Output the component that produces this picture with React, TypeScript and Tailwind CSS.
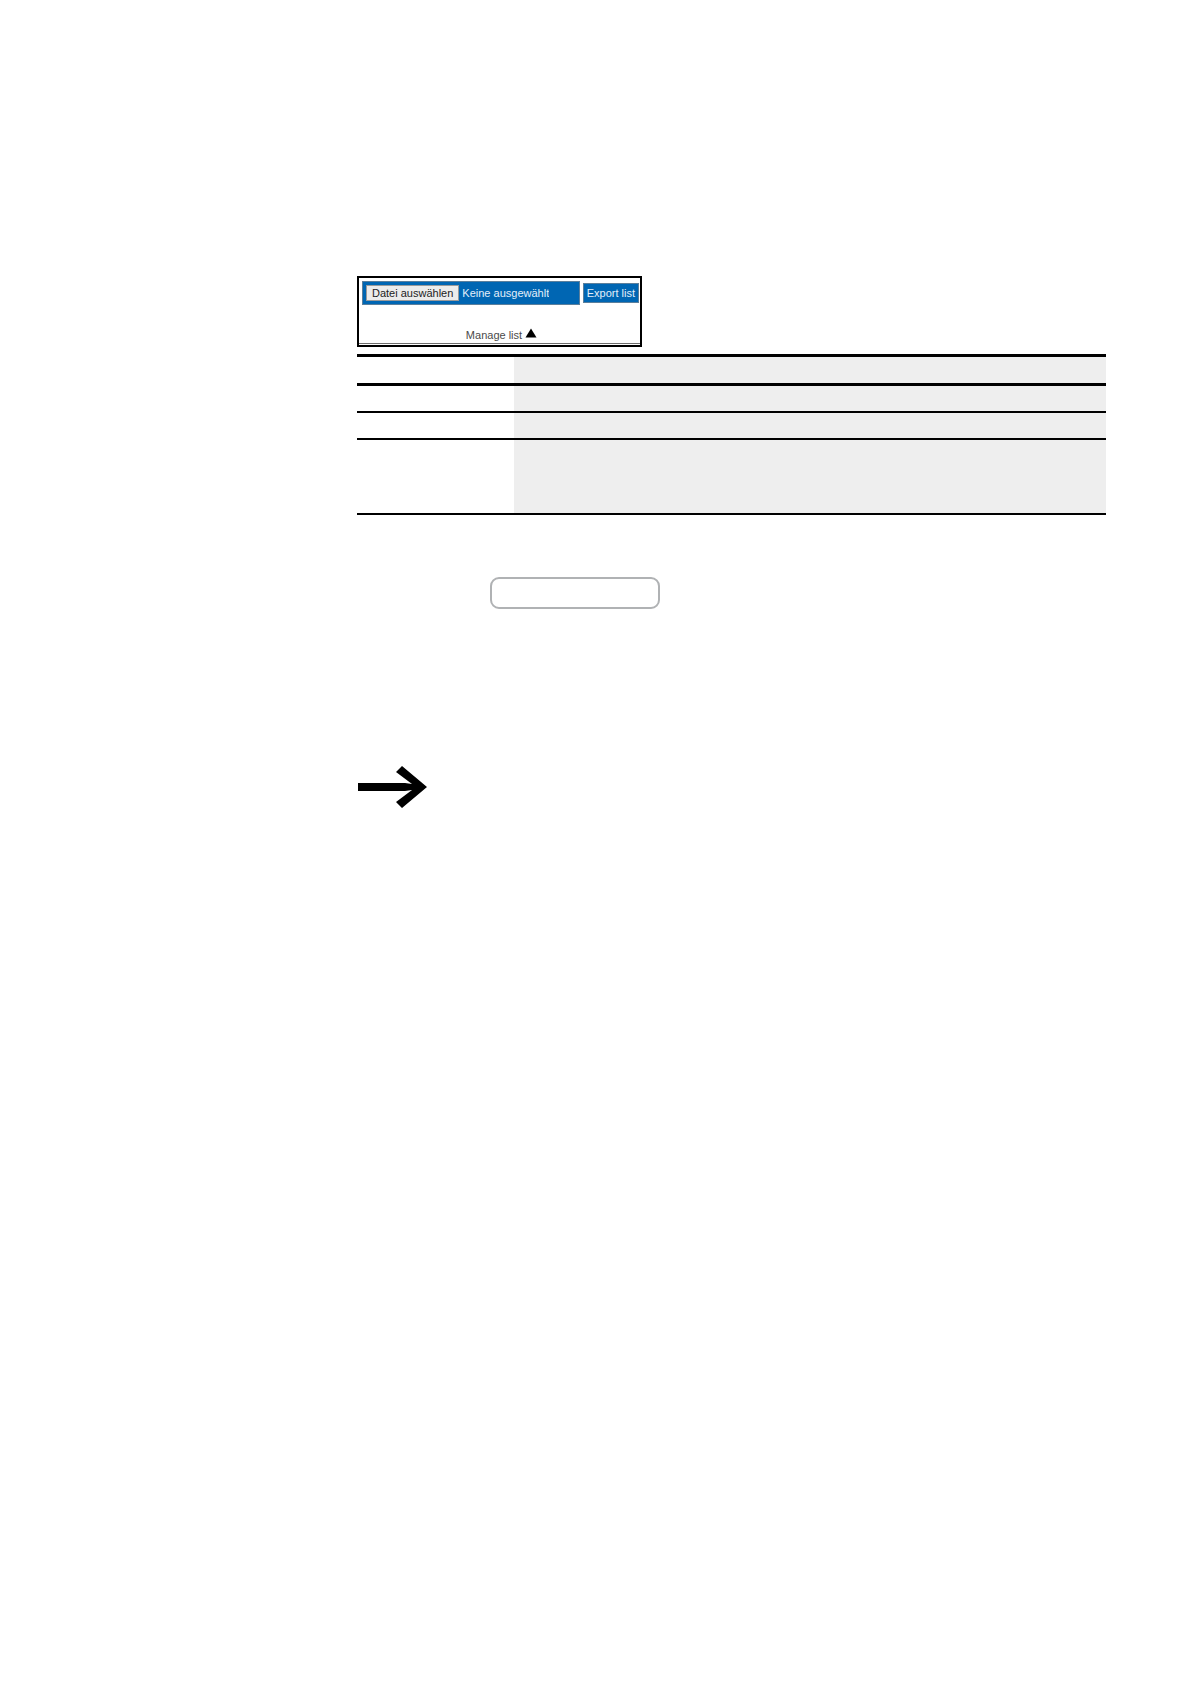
import { useRef, useState } from 'react';
import clsx from 'clsx';

// ── Shared constants ──

/** Row rules get thinner below the heading rows */
const ROWS = [
  { id: 'head', className: 'h-[29px] border-t-[3px]' },
  { id: 'choose', className: 'h-7 border-t-[3px]' },
  { id: 'export', className: 'h-[27px] border-t-2' },
  { id: 'manage', className: 'h-[77px] border-y-2' },
];

// ── ListManager ──

function ListManager() {
  const fileRef = useRef<HTMLInputElement>(null);
  const [fileName, setFileName] = useState('Keine ausgewählt');

  return (
    <section className="w-[285px] border-2 border-black bg-white pt-[3px] pb-px text-[11px]">
      <div className="flex items-center gap-[3px] pr-px pl-[3px]">
        <div className="flex h-6 flex-1 items-center gap-[3px] border border-[#5b7f9c] bg-[#0066b3] px-[3px]">
          <button
            type="button"
            onClick={() => fileRef.current?.click()}
            className="h-4 shrink-0 border border-[#9a9a9a] bg-[#ececec] px-[5px] leading-3 whitespace-nowrap text-[#1c1c1c]"
          >
            Datei auswählen
          </button>
          <input
            ref={fileRef}
            type="file"
            aria-label="Datei auswählen"
            className="hidden"
            onChange={(e) => setFileName(e.target.files?.[0]?.name ?? 'Keine ausgewählt')}
          />
          <span className="truncate text-[#e3effa]">{fileName}</span>
        </div>
        <button
          type="button"
          className="h-5 shrink-0 border border-[#5b7f9c] bg-[#0066b3] px-[3px] leading-4 text-[#e3effa]"
        >
          Export list
        </button>
      </div>

      {/* Collapse toggle */}
      <div className="mt-5 flex h-[19px] items-end justify-center border-b border-[#6e6e6e]">
        <button type="button" className="flex items-center gap-[3px] pl-1 leading-4 text-[#4a4a4a]">
          Manage list
          <svg viewBox="0 0 12 10" className="mb-1 h-[10px] w-3" aria-hidden="true">
            <path d="M6 0.5 11.5 9.5H0.5Z" fill="#000" />
          </svg>
        </button>
      </div>
    </section>
  );
}

// ── DescriptionTable ──

function DescriptionTable() {
  return (
    <table className="mt-[7px] w-full table-fixed border-separate border-spacing-0">
      <colgroup>
        <col className="w-[157px]" />
        <col />
      </colgroup>
      <tbody>
        {ROWS.map((row) => (
          <tr key={row.id}>
            <td className={clsx('border-black p-0', row.className)} />
            <td className={clsx('border-black bg-[#eeeeee] p-0', row.className)} />
          </tr>
        ))}
      </tbody>
    </table>
  );
}

export default function App() {
  return (
    <main className="min-h-screen bg-white pt-[276px] pr-[85px] pb-16 pl-[357px] font-['Liberation_Sans',Arial,sans-serif]">
      <ListManager />
      <DescriptionTable />

      <div className="mt-[62px] ml-[133px]">
        <input
          type="text"
          aria-label="List name"
          className="block h-8 w-[170px] rounded-[9px] border-2 border-[#b0b2b4] bg-white px-2 text-sm"
        />
      </div>

      {/* Note arrow */}
      <svg viewBox="0 0 70 42" className="mt-[157px] h-[42px] w-[70px]" aria-hidden="true">
        <path
          d="M1 17H48L55 18 39 6 45 0 70 21 45 42 39 36 55 24 48 25H1Z"
          fill="#000"
        />
      </svg>
    </main>
  );
}
